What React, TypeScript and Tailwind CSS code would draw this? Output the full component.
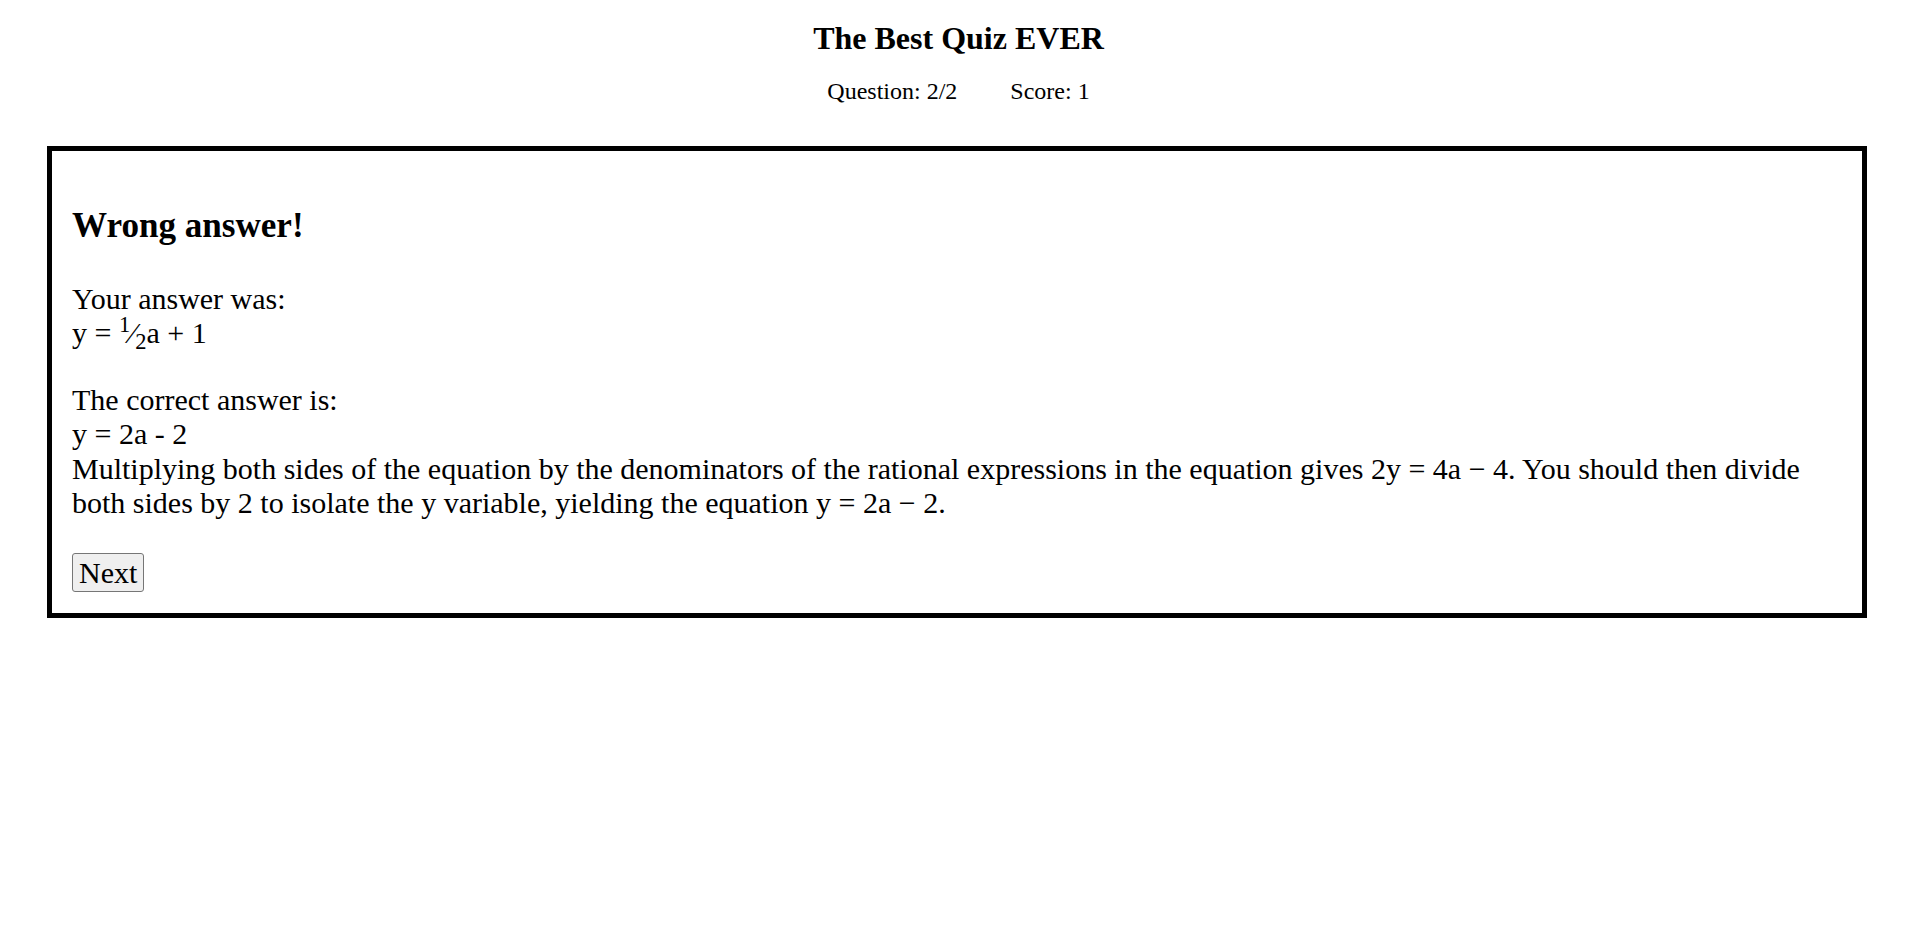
import React from "react";

const QuizResult: React.FC = () => {
  return (
    <div className="ml-[47px] mr-[50px] border-[5px] border-black px-[20px] pt-[20px] pb-[21px] text-[30px] leading-[34.5px]">
      <h3 className="mt-[34.5px] text-[35.1px] font-bold leading-[40px]">
        Wrong answer!
      </h3>
      <p className="mt-[36px]">
        Your answer was:
        <br />
        y = <sup>1</sup>&frasl;<sub>2</sub>a + 1
      </p>
      <p className="mt-[32px]">
        The correct answer is:
        <br />
        y = 2a - 2
        <br />
        Multiplying both sides of the equation by the denominators of the
        rational expressions in the equation gives 2y = 4a &minus; 4. You
        should then divide both sides by 2 to isolate the y variable, yielding
        the equation y = 2a &minus; 2.
      </p>
      <button className="mt-[32px] block rounded-[3px] border border-[#767676] bg-[#efefef] px-[6px] py-px text-[30px] leading-[35px] text-black">
        Next
      </button>
    </div>
  );
};

const App: React.FC = () => {
  return (
    <div className="min-h-screen bg-white pt-[20px] font-['Liberation_Serif',serif] text-black">
      <h1 className="text-center text-[32px] font-bold leading-[37px]">
        The Best Quiz EVER
      </h1>
      <div className="mt-[20px] flex justify-center gap-[53px] text-[24px] leading-[28px]">
        <span>Question: 2/2</span>
        <span>Score: 1</span>
      </div>
      <div className="mt-[41px]">
        <QuizResult />
      </div>
    </div>
  );
};

export default App;
